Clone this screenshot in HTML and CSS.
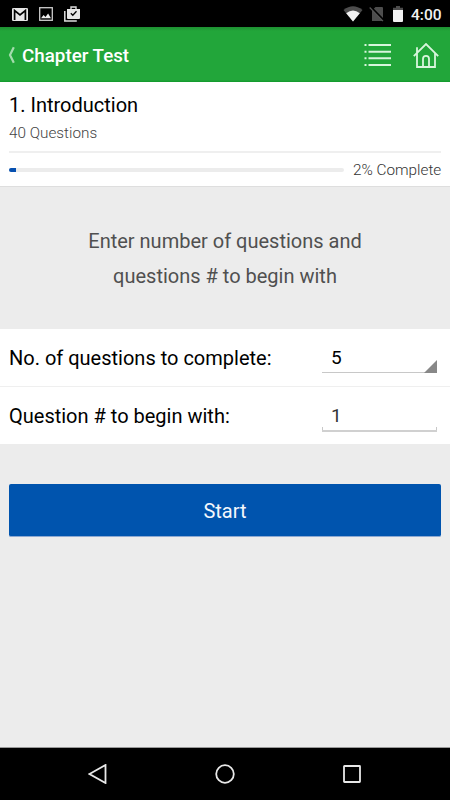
FILE: index.html
```html
<!DOCTYPE html>
<html lang="en">
  <head>
    <meta charset="UTF-8" />
    <meta name="viewport" content="width=device-width, initial-scale=1.0" />
    <title>Chapter Test</title>
    <link rel="stylesheet" href="styles.css">
  </head>

  <body>
    <div class="statusBar">
      <svg class="mailIcon" width="16" height="13" viewBox="0 0 16 13">
        <rect width="16" height="13" rx="1.3" fill="#e6e6e6" />
        <path d="M2.600 12V2.500L8 7l5.400-4.500V12" fill="none" stroke="#000" stroke-width="1.700" />
      </svg>
      <svg class="photoIcon" width="14" height="14" viewBox="0 0 14 14">
        <rect x="0.700" y="0.700" width="12.600" height="12.600" fill="none" stroke="#ccc" stroke-width="1.300" />
        <path d="M2 11.300L4.600 8l1.900 2 2.600-3.500L12 11.300z" fill="#eee" />
      </svg>
      <svg class="bagIcon" width="16" height="16" viewBox="0 0 16 16">
        <path d="M0.800 5v10h12" fill="none" stroke="#ddd" stroke-width="1.500" />
        <path d="M7 3V1h5v2" fill="none" stroke="#ddd" stroke-width="1.400" />
        <path d="M3 3h13v9q0 1-1 1H4q-1 0-1-1z" fill="#e6e6e6" />
        <path d="M6.800 7.200l2 2 3.700-3.900" fill="none" stroke="#000" stroke-width="1.300" />
      </svg>
      <svg class="wifiIcon" width="20" height="16" viewBox="0 0 20 16">
        <path d="M0.500 4Q10-3.500 19.500 4L10 15.500z" fill="#4d4d4d" />
        <path d="M3.200 7.200Q10 2 16.800 7.200L10 15.500z" fill="#f2f2f2" />
      </svg>
      <svg class="simIcon" width="15" height="16" viewBox="0 0 15 16">
        <path d="M6.500 1H13q1 0 1 1v13H3V4.500z" fill="#4d4d4d" />
        <path d="M1.800 1L15 14.500" stroke="#000" stroke-width="2" />
        <path d="M0.700 1.500L14 15.200" stroke="#555" stroke-width="1.200" />
      </svg>
      <svg class="batteryIcon" width="10" height="16" viewBox="0 0 10 16">
        <path d="M0 1.700h3V0h4v1.700h3V4H0z" fill="#4d4d4d" />
        <path d="M0 4h10v11q0 1-1 1H1q-1 0-1-1z" fill="#f2f2f2" />
      </svg>
      <span class="clock">4:00</span>
    </div>

    <header class="navBar">
      <svg class="backIcon" width="7" height="18" viewBox="0 0 7 18">
        <path d="M5.800 1.200L2 9l3.800 7.800" fill="none" stroke="#a5dcae" stroke-width="2.200" />
      </svg>
      <h1 class="navTitle">Chapter Test</h1>
      <svg class="listIcon" width="28" height="24" viewBox="0 0 28 24">
        <path d="M0.500 2h2M0.500 8.700h2M0.500 15.300h2M0.500 22h2M4.500 2H27M4.500 8.700H27M4.500 15.300H27M4.500 22H27" stroke="#d8f5dc" stroke-width="2" />
      </svg>
      <svg class="homeIcon" width="26" height="25" viewBox="0 0 26 25">
        <path d="M0.800 13.200L13 1l12.200 12.200M4 10.500V24h18V10.500M4 9.500V4.200M10 24v-8.200a3 3 0 0 1 6 0V24" fill="none" stroke="#d8f5dc" stroke-width="1.800" />
      </svg>
    </header>

    <section class="chapter">
      <h2 class="chapterName">1. Introduction</h2>
      <p class="questionCount">40 Questions</p>
      <div class="progressRow">
        <div class="progressTrack">
          <div class="progressFill" style="width: 2%"></div>
        </div>
        <span class="progressText">2% Complete</span>
      </div>
    </section>

    <main class="content">
      <p class="desc">
        Enter number of questions and<br />
        questions # to begin with
      </p>

      <div class="fieldRow">
        <span class="label">No. of questions to complete:</span>
        <div class="spinner">
          <span>5</span>
          <svg width="13" height="13" viewBox="0 0 13 13">
            <path d="M13 0v13H0z" fill="#888" />
          </svg>
        </div>
      </div>
      <div class="fieldRow">
        <span class="label">Question # to begin with:</span>
        <div class="textField">1</div>
      </div>

      <button class="startBtn" id="startBtn">Start</button>
    </main>

    <footer class="systemNav">
      <svg width="20" height="20" viewBox="0 0 20 20">
        <path d="M1.500 10L17.500 1v18z" />
      </svg>
      <svg width="20" height="20" viewBox="0 0 20 20">
        <circle cx="10" cy="10" r="8.800" />
      </svg>
      <svg width="20" height="20" viewBox="0 0 20 20">
        <rect x="2" y="2" width="16" height="16" rx="0.500" />
      </svg>
    </footer>
  </body>
</html>
```

FILE: styles.css
```css
* {
  box-sizing: border-box;
}

body {
  display: flex;
  flex-direction: column;
  height: 800px;
  margin: 0;
  overflow: hidden;
  background-color: #ececec;
  color: #000;
  font-family: Roboto, sans-serif;
}

h1,
h2,
p {
  margin: 0;
}

svg {
  display: block;
  flex: none;
}

/* Status bar */
.statusBar {
  display: flex;
  align-items: center;
  height: 27px;
  padding: 1px 8px 0 12px;
  background-color: #000;
}

.photoIcon {
  margin-left: 11px;
}

.bagIcon {
  margin-left: 11px;
}

.wifiIcon {
  margin-left: auto;
}

.simIcon {
  margin-left: 6px;
}

.batteryIcon {
  margin-left: 9px;
}

.clock {
  width: 31px;
  margin-left: 8px;
  padding-top: 2px;
  color: #f2f2f2;
  font-size: 15.500px;
  font-weight: 500;
  white-space: nowrap;
}

/* Green title bar */
.navBar {
  display: flex;
  align-items: center;
  height: 55px;
  padding: 1px 11px 0 8px;
  background: linear-gradient(#1d8f31, #22a63a 4px, #22a63a 53px, #10992a);
  color: #fff;
}

.navTitle {
  flex: 1;
  margin-left: 7px;
  padding-top: 2px;
  font-size: 18.800px;
  font-weight: 500;
}

.homeIcon {
  margin-left: 21px;
}

/* Chapter summary */
.chapter {
  height: 105px;
  padding: 11px 9px 0;
  background-color: #fff;
  border-bottom: 1px solid #dedede;
}

.chapterName {
  font-size: 20px;
  font-weight: 400;
  line-height: 24px;
}

.questionCount {
  height: 36px;
  padding-top: 5px;
  font-size: 15.300px;
  font-weight: 300;
  line-height: 22px;
  color: #444;
  border-bottom: 2px solid #efefef;
}

.progressRow {
  display: flex;
  align-items: center;
  height: 33px;
}

.progressTrack {
  flex: 1;
  height: 4px;
  border-radius: 2px;
  background-color: #ececec;
  overflow: hidden;
}

.progressFill {
  height: 100%;
  background-color: #0650b0;
}

.progressText {
  width: 88px;
  margin-left: 9px;
  color: #333;
  font-size: 15.300px;
  font-weight: 300;
  white-space: nowrap;
}

/* Form */
.content {
  flex: 1;
}

.desc {
  height: 142px;
  padding-top: 37px;
  color: #505050;
  font-size: 20px;
  line-height: 35px;
  text-align: center;
}

.fieldRow {
  display: flex;
  justify-content: space-between;
  height: 57px;
  padding: 0 13px 0 9px;
  background-color: #fff;
}

.fieldRow + .fieldRow {
  height: 58px;
  border-top: 1px solid #efefef;
}

.label {
  font-size: 20px;
  line-height: 58px;
  white-space: nowrap;
}

.spinner,
.textField {
  width: 115px;
  padding-left: 9px;
  font-size: 19px;
  line-height: 58px;
}

.spinner {
  display: flex;
  justify-content: space-between;
  height: 44px;
  border-bottom: 1px solid #c8c8c8;
}

/* Corner arrow sits on the underline */
.spinner svg {
  align-self: flex-end;
  margin-bottom: -1px;
}

.textField {
  height: 45px;
  color: #333;
  border-bottom: 2px solid #d0d0d0;
  background:
    linear-gradient(#c8c8c8, #c8c8c8) left bottom / 1px 3px no-repeat,
    linear-gradient(#c8c8c8, #c8c8c8) right bottom / 1px 3px no-repeat;
}

.startBtn {
  display: block;
  width: 432px;
  height: 53px;
  margin: 40px auto 0;
  padding: 2px 0 0;
  border: 0;
  border-bottom: 1px solid #8da9d2;
  border-radius: 2px;
  background-color: #0054ae;
  color: #f4f7fc;
  font-family: inherit;
  font-size: 20px;
}

/* Android buttons */
.systemNav {
  display: flex;
  align-items: center;
  justify-content: center;
  gap: 107px;
  height: 53px;
  background-color: #000;
  border-top: 1px solid #999;
}

.systemNav svg {
  fill: none;
  stroke: #e8e8e8;
  stroke-width: 1.800;
}
```
